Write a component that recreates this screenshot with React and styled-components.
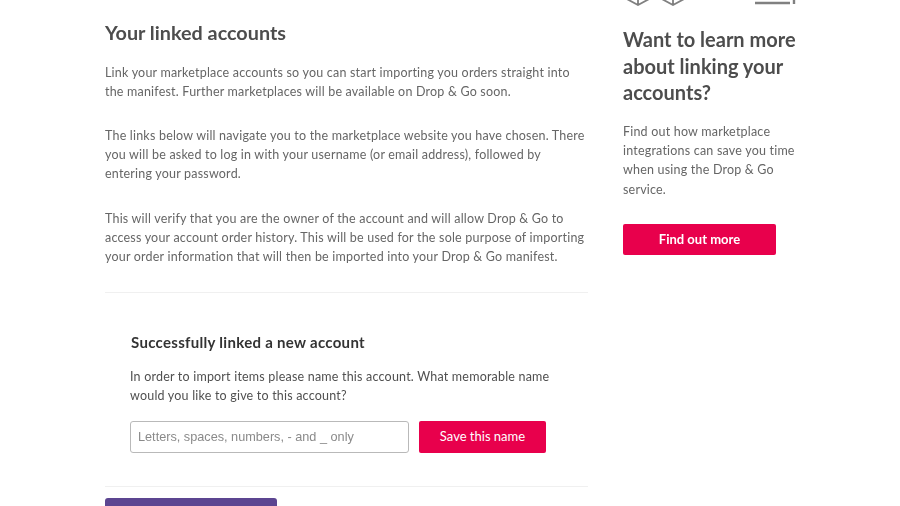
import styled, { createGlobalStyle } from 'styled-components'

const GlobalStyle = createGlobalStyle`
  html, body {
    margin: 0;
    height: 100%;
    overflow: hidden;
    background: #fff;
  }
  body {
    font-family: "Lato", "Open Sans", sans-serif;
    color: #4a4a4a;
  }
`

const Page = styled.div`
  width: 900px;
  height: 506px;
  overflow: hidden;
  display: grid;
  grid-template-columns: 483px 175px;
  column-gap: 35px;
  padding-left: 105px;
  box-sizing: border-box;
  filter: blur(0.45px);
`

const Main = styled.main`
  padding-top: 20px;
`

const Title = styled.h2`
  margin: 0 0 18.5px;
  font-size: 19.8px;
  line-height: 24px;
  font-weight: 700;
  color: #4d4d4d;
`

const Intro = styled.div`
  padding-bottom: 1px;
`

const Copy = styled.p`
  margin: 0 0 25.5px;
  font-size: 12.5px;
  line-height: 19px;
  letter-spacing: 0.2px;
  color: #666;
  white-space: nowrap;
`

const Rule = styled.hr`
  margin: 0;
  border: 0;
  border-top: 1px solid #f0f0f0;
`

const LinkBox = styled.section`
  padding: 40px 25px 33px;
`

const BoxTitle = styled.h3`
  margin: 0 0 16px;
  padding-left: 1px;
  font-size: 15px;
  line-height: 18px;
  letter-spacing: 0.3px;
  font-weight: 700;
  color: #333;
`

const BoxCopy = styled(Copy)`
  margin-bottom: 16px;
  color: #505050;
`

const NameForm = styled.form`
  display: flex;
  gap: 10px;
`

const NameInput = styled.input`
  width: 279px;
  height: 32px;
  box-sizing: border-box;
  padding: 0 7px;
  border: 1px solid #b9b9b9;
  border-radius: 3px;
  background: #fff;
  font-family: "Liberation Sans", Arial, sans-serif;
  font-size: 12.7px;

  &::placeholder {
    color: #8a8a8a;
    opacity: 1;
  }
`

const RedButton = styled.button`
  width: ${(p) => p.$width}px;
  height: ${(p) => p.$height}px;
  padding: 0 0 2px;
  border: 0;
  border-radius: 2px;
  background: #e8004c;
  color: #fff;
  font-family: inherit;
  font-size: 13px;
  font-weight: ${(p) => p.$weight};
`

const PurpleButton = styled.button`
  display: block;
  width: 172px;
  height: 40px;
  margin-top: 11px;
  padding: 0;
  border: 0;
  border-radius: 3px;
  background: #5c4591;
`

const Aside = styled.aside`
  display: flex;
  flex-direction: column;
  align-items: flex-start;
`

const Illustration = styled.svg`
  display: block;
  width: 175px;
  height: 26px;
  margin-top: -20px;
  margin-bottom: 20px;
  fill: none;
  stroke: #808080;
  stroke-width: 1.8;
`

const SideTitle = styled.h2`
  margin: 0 0 16px;
  font-size: 20px;
  line-height: 26.5px;
  font-weight: 700;
  color: #4d4d4d;
`

const SideCopy = styled(Copy)`
  margin-bottom: 25px;
  line-height: 19.4px;
`

export default function App() {
  return (
    <>
      <GlobalStyle />
      <Page>
        <Main>
          <Title>Your linked accounts</Title>
          <Intro>
            <Copy>
              Link your marketplace accounts so you can start importing you orders straight into
              <br />
              the manifest. Further marketplaces will be available on Drop &amp; Go soon.
            </Copy>
            <Copy>
              The links below will navigate you to the marketplace website you have chosen. There
              <br />
              you will be asked to log in with your username (or email address), followed by
              <br />
              entering your password.
            </Copy>
            <Copy>
              This will verify that you are the owner of the account and will allow Drop &amp; Go to
              <br />
              access your account order history. This will be used for the sole purpose of importing
              <br />
              your order information that will then be imported into your Drop &amp; Go manifest.
            </Copy>
          </Intro>
          <Rule />
          <LinkBox>
            <BoxTitle>Successfully linked a new account</BoxTitle>
            <BoxCopy>
              In order to import items please name this account. What memorable name
              <br />
              would you like to give to this account?
            </BoxCopy>
            <NameForm>
              <NameInput placeholder="Letters, spaces, numbers, - and _ only" />
              <RedButton type="button" $width={127} $height={32} $weight={400}>
                Save this name
              </RedButton>
            </NameForm>
          </LinkBox>
          <Rule />
          <PurpleButton type="button" />
        </Main>
        <Aside>
          <Illustration viewBox="0 0 175 26">
            <path d="M2 18 L15 25 L28 18 M15 25 V14" />
            <path d="M37 18 L50 25 L63 18 M50 25 V14" />
            <path d="M132 23 H167 M171 19 V24" strokeWidth="2.4" />
          </Illustration>
          <SideTitle>
            Want to learn more
            <br />
            about linking your
            <br />
            accounts?
          </SideTitle>
          <SideCopy>
            Find out how marketplace
            <br />
            integrations can save you time
            <br />
            when using the Drop &amp; Go
            <br />
            service.
          </SideCopy>
          <RedButton type="button" $width={153} $height={31} $weight={700}>
            Find out more
          </RedButton>
        </Aside>
      </Page>
    </>
  )
}
